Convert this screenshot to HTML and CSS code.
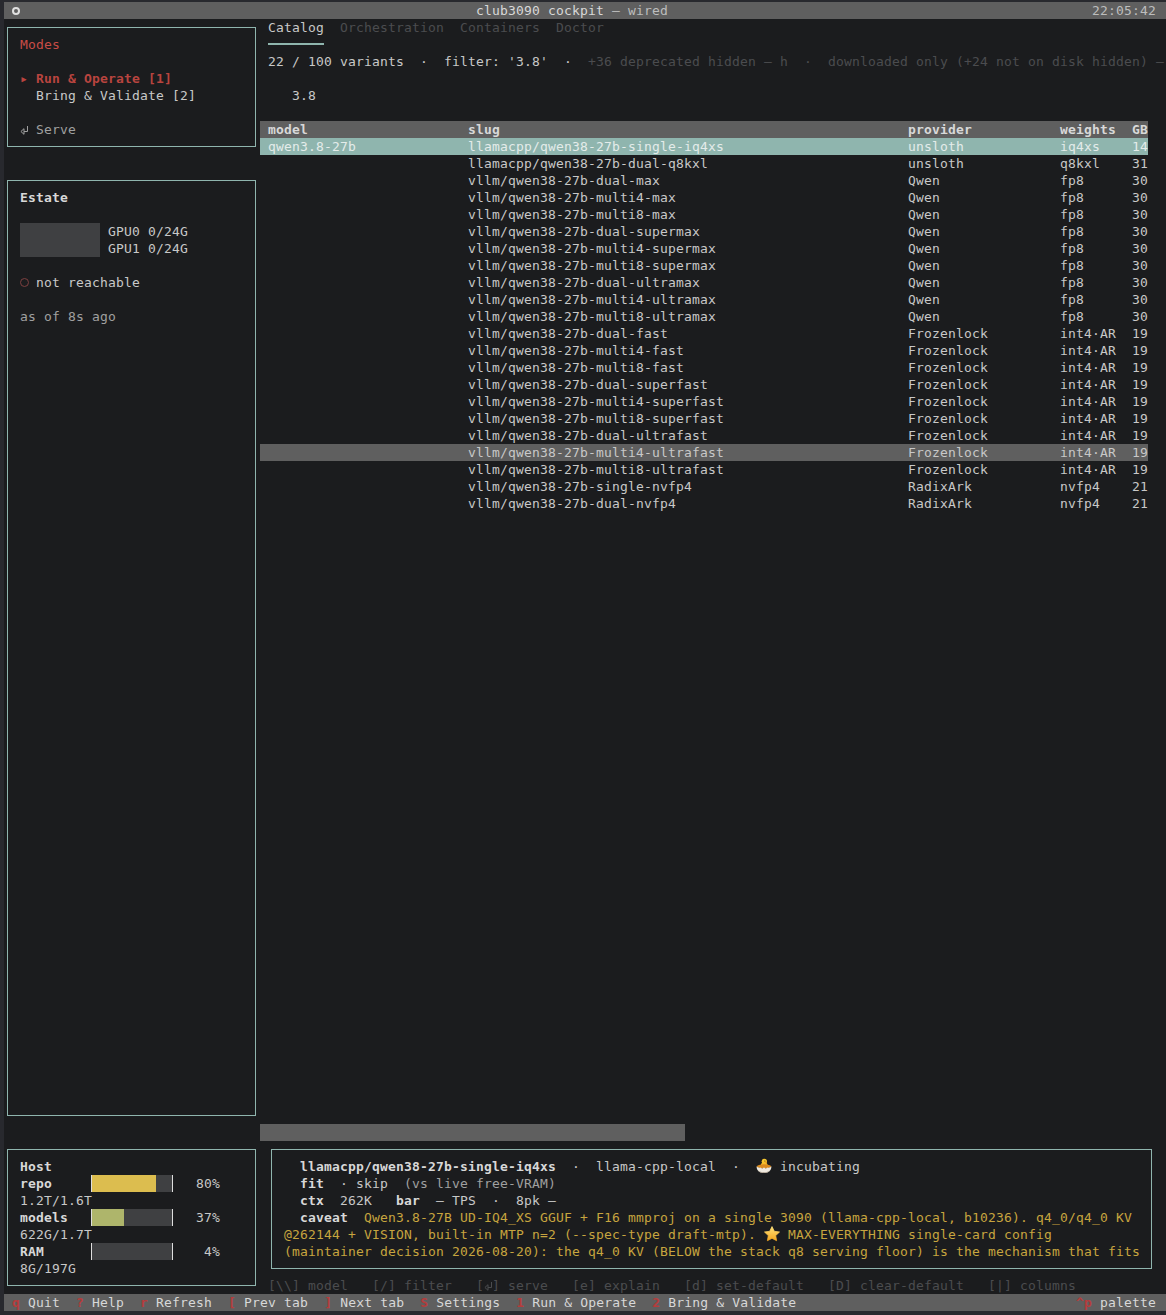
FILE: index.html
```html
<!DOCTYPE html>
<html lang="en">
<head>
    <meta charset="UTF-8">
    <meta name="viewport" content="width=device-width, initial-scale=1.0">
    <title>club3090 cockpit</title>
    <link rel="stylesheet" href="styles.css">
</head>
<body>
<div class="app">
    <div class="titlebar">
        <span class="title-dot"></span>
        <span class="title">club3090 cockpit <span class="title-sub">— wired</span></span>
        <span class="clock">22:05:42</span>
    </div>

    <div class="main">
        <div class="sidebar">
            <div class="box modes">
                <div class="red">Modes</div>
                <div class="blank"></div>
                <div class="red strong"><span class="arrow">▸</span>Run &amp; Operate [1]</div>
                <div class="indent">Bring &amp; Validate [2]</div>
                <div class="blank"></div>
                <div class="soft"><span class="arrow"><svg class="enter" viewBox="0 0 8 9"><path d="M7.500 0v5.500H4M4 2.700L.9 5.500 4 8.300z" fill="none" stroke="currentColor"/></svg></span>Serve</div>
            </div>

            <div class="box estate">
                <div class="bold">Estate</div>
                <div class="blank"></div>
                <div class="gpus">
                    <div class="gpu-block"></div>
                    <div>GPU0 0/24G<br>GPU1 0/24G</div>
                </div>
                <div class="blank"></div>
                <div><span class="arrow"><span class="status-dot"></span></span>not reachable</div>
                <div class="blank"></div>
                <div class="soft">as of 8s ago</div>
            </div>

            <div class="box host">
                <div class="bold">Host</div>
                <div class="meter">
                    <span class="bold">repo</span>
                    <div class="bar"><div class="fill yellow" style="width:64px"></div></div>
                    <span class="pct">80%</span>
                </div>
                <div>1.2T/1.6T</div>
                <div class="meter">
                    <span class="bold">models</span>
                    <div class="bar"><div class="fill olive" style="width:32px"></div></div>
                    <span class="pct">37%</span>
                </div>
                <div>622G/1.7T</div>
                <div class="meter">
                    <span class="bold">RAM</span>
                    <div class="bar"></div>
                    <span class="pct">4%</span>
                </div>
                <div>8G/197G</div>
            </div>
        </div>

        <div class="content">
            <div class="tabs">
                <span class="tab active">Catalog</span>
                <span class="tab">Orchestration</span>
                <span class="tab">Containers</span>
                <span class="tab">Doctor</span>
            </div>

            <div class="filters">22 / 100 variants  ·  filter: '3.8'  ·  <span class="dim">+36 deprecated hidden — h  ·  downloaded only (+24 not on disk hidden) —</span></div>
            <div class="query">3.8</div>

            <div class="table">
                <div class="row head"><span>model</span><span>slug</span><span>provider</span><span>weights</span><span>GB</span></div>
                <div class="row selected"><span>qwen3.8-27b</span><span>llamacpp/qwen38-27b-single-iq4xs</span><span>unsloth</span><span>iq4xs</span><span>14</span></div>
                <div class="row"><span></span><span>llamacpp/qwen38-27b-dual-q8kxl</span><span>unsloth</span><span>q8kxl</span><span>31</span></div>
                <div class="row"><span></span><span>vllm/qwen38-27b-dual-max</span><span>Qwen</span><span>fp8</span><span>30</span></div>
                <div class="row"><span></span><span>vllm/qwen38-27b-multi4-max</span><span>Qwen</span><span>fp8</span><span>30</span></div>
                <div class="row"><span></span><span>vllm/qwen38-27b-multi8-max</span><span>Qwen</span><span>fp8</span><span>30</span></div>
                <div class="row"><span></span><span>vllm/qwen38-27b-dual-supermax</span><span>Qwen</span><span>fp8</span><span>30</span></div>
                <div class="row"><span></span><span>vllm/qwen38-27b-multi4-supermax</span><span>Qwen</span><span>fp8</span><span>30</span></div>
                <div class="row"><span></span><span>vllm/qwen38-27b-multi8-supermax</span><span>Qwen</span><span>fp8</span><span>30</span></div>
                <div class="row"><span></span><span>vllm/qwen38-27b-dual-ultramax</span><span>Qwen</span><span>fp8</span><span>30</span></div>
                <div class="row"><span></span><span>vllm/qwen38-27b-multi4-ultramax</span><span>Qwen</span><span>fp8</span><span>30</span></div>
                <div class="row"><span></span><span>vllm/qwen38-27b-multi8-ultramax</span><span>Qwen</span><span>fp8</span><span>30</span></div>
                <div class="row"><span></span><span>vllm/qwen38-27b-dual-fast</span><span>Frozenlock</span><span>int4·AR</span><span>19</span></div>
                <div class="row"><span></span><span>vllm/qwen38-27b-multi4-fast</span><span>Frozenlock</span><span>int4·AR</span><span>19</span></div>
                <div class="row"><span></span><span>vllm/qwen38-27b-multi8-fast</span><span>Frozenlock</span><span>int4·AR</span><span>19</span></div>
                <div class="row"><span></span><span>vllm/qwen38-27b-dual-superfast</span><span>Frozenlock</span><span>int4·AR</span><span>19</span></div>
                <div class="row"><span></span><span>vllm/qwen38-27b-multi4-superfast</span><span>Frozenlock</span><span>int4·AR</span><span>19</span></div>
                <div class="row"><span></span><span>vllm/qwen38-27b-multi8-superfast</span><span>Frozenlock</span><span>int4·AR</span><span>19</span></div>
                <div class="row"><span></span><span>vllm/qwen38-27b-dual-ultrafast</span><span>Frozenlock</span><span>int4·AR</span><span>19</span></div>
                <div class="row hover"><span></span><span>vllm/qwen38-27b-multi4-ultrafast</span><span>Frozenlock</span><span>int4·AR</span><span>19</span></div>
                <div class="row"><span></span><span>vllm/qwen38-27b-multi8-ultrafast</span><span>Frozenlock</span><span>int4·AR</span><span>19</span></div>
                <div class="row"><span></span><span>vllm/qwen38-27b-single-nvfp4</span><span>RadixArk</span><span>nvfp4</span><span>21</span></div>
                <div class="row"><span></span><span>vllm/qwen38-27b-dual-nvfp4</span><span>RadixArk</span><span>nvfp4</span><span>21</span></div>
            </div>

            <div class="scrollbar"></div>

            <div class="box detail">
                <div class="line indent2"><span class="bold">llamacpp/qwen38-27b-single-iq4xs</span>  ·  llama-cpp-local  ·  <svg class="emoji" viewBox="0 0 16 16"><circle cx="8.300" cy="3.400" r="2.700" fill="#f6c62f"/><ellipse cx="8.200" cy="7" rx="3.400" ry="2.600" fill="#f4bb2a"/><path d="M9.500 3.600l1.800.5-1.700.8z" fill="#e8851c"/><circle cx="8.900" cy="2.900" r=".5" fill="#3a2a10"/><ellipse cx="8" cy="8.300" rx="7.200" ry="2" fill="#d98a1e"/><path d="M.6 8.300c1.200 1.400 3 1.600 4 1.200l1.500 1 1.900-1 1.900 1 1.500-1c1 .4 2.800.2 4-1.200.2 3.500-2.600 6.700-7.400 6.700S.4 11.800.6 8.300z" fill="#efe9df"/><path d="M2 12.200c1.400 1.500 3.500 2 6 2s4.600-.5 6-2c-1 2-3.200 2.900-6 2.900s-5-.9-6-2.900z" fill="#a89b8c"/></svg> incubating</div>
                <div class="line indent2"><span class="bold">fit</span>  · skip  <span class="soft">(vs live free-VRAM)</span></div>
                <div class="line indent2"><span class="bold">ctx</span>  262K   <span class="bold">bar</span>  — TPS  ·  8pk —</div>
                <div class="line indent2"><span class="bold">caveat</span>  <span class="gold">Qwen3.8-27B UD-IQ4_XS GGUF + F16 mmproj on a single 3090 (llama-cpp-local, b10236). q4_0/q4_0 KV</span></div>
                <div class="line gold">@262144 + VISION, built-in MTP n=2 (--spec-type draft-mtp). <svg class="emoji" viewBox="0 0 16 16"><defs><linearGradient id="star" x1="0" y1="0" x2="0" y2="1"><stop offset="0" stop-color="#ffe27a"/><stop offset="1" stop-color="#f2a51e"/></linearGradient></defs><path d="M8 .6l2.300 4.700 5.200.7-3.800 3.600.9 5.100L8 12.300l-4.600 2.400.9-5.100L.5 6l5.200-.7z" fill="url(#star)" stroke="url(#star)" stroke-width=".8" stroke-linejoin="round"/></svg> MAX-EVERYTHING single-card config</div>
                <div class="line gold">(maintainer decision 2026-08-20): the q4_0 KV (BELOW the stack q8 serving floor) is the mechanism that fits</div>
            </div>

            <div class="hints">[\\] model   [/] filter   [<svg class="enter" viewBox="0 0 8 9"><path d="M7.500 0v5.500H4M4 2.700L.9 5.500 4 8.300z" fill="none" stroke="currentColor"/></svg>] serve   [e] explain   [d] set-default   [D] clear-default   [|] columns</div>
        </div>
    </div>

    <div class="footer">
        <span class="key"><b>q</b> Quit</span>
        <span class="key"><b>?</b> Help</span>
        <span class="key"><b>r</b> Refresh</span>
        <span class="key"><b>[</b> Prev tab</span>
        <span class="key"><b>]</b> Next tab</span>
        <span class="key"><b>S</b> Settings</span>
        <span class="key"><b>1</b> Run &amp; Operate</span>
        <span class="key"><b>2</b> Bring &amp; Validate</span>
        <span class="key palette"><b>^p</b> palette</span>
    </div>
</div>
</body>
</html>
```

FILE: styles.css
```css
html, body{
    margin: 0;
    height: 100%;
}
body{
    background-color: #28292e;
    padding: 2px 0 4px 4px;
    box-sizing: border-box;
    overflow: hidden;
    color: #c8c8c8;
    font-family: "DejaVu Sans Mono", "Liberation Mono", monospace;
    font-size: 13px;
    letter-spacing: 0.174px; /*13px DejaVu is 7.83 wide, terminal cell is 8*/
    line-height: 17px;
}
.app{
    height: 100%;
    display: flex;
    flex-direction: column;
    background-color: #1b1c1e;
}
.titlebar, .footer{
    height: 17px;
    flex: none;
    display: flex;
    align-items: center;
    background-color: #5f5f5f;
    color: #d8d8d8;
}
.title-dot{
    width: 8px;
    height: 8px;
    box-sizing: border-box;
    margin-left: 8px;
    border: 2px solid #e0e0e0;
    border-radius: 50%;
}
.title{
    margin-left: 456px;
}
.title-sub{
    color: #bdbdbd;
}
.clock{
    margin-left: auto;
    padding-right: 10px;
    color: #bdbdbd;
}
.main{
    flex: 1;
    display: flex;
    min-height: 0;
}
.sidebar{
    width: 256px;
    flex: none;
    box-sizing: border-box;
    padding: 8px 4px 8px 3px;
    display: flex;
    flex-direction: column;
    gap: 33px;
}
.box{
    border: 1px solid #8fb5ae;
    padding: 8px 12px;
    box-sizing: border-box;
}
.modes{
    height: 120px;
}
.estate{
    flex: 1;
}
.host{
    height: 137px;
}
.blank{
    height: 17px;
}
.red{
    color: #c94c46;
}
.strong{
    font-weight: bold;
    color: #b9443f;
}
.bold{
    font-weight: bold;
    color: #d8d8d8;
}
.soft{
    color: #a0a0a0;
}
.arrow{
    display: inline-block;
    width: 16px;
}
.enter{
    width: 8px;
    height: 9px;
    vertical-align: -1px;
}
.indent{
    padding-left: 16px;
}
.gpus{
    display: flex;
    gap: 8px;
}
.gpu-block{
    width: 80px;
    height: 34px;
    background-color: #3f4042;
}
.status-dot{
    display: inline-block;
    width: 9px;
    height: 9px;
    box-sizing: border-box;
    border: 1px solid #7d4040;
    border-radius: 50%;
}
.meter{
    display: grid;
    grid-template-columns: 71px 82px 47px;
}
.bar{
    height: 17px;
    box-sizing: border-box;
    border-left: 1px solid #dedede;
    border-right: 1px solid #dedede;
    background-color: #3f4042;
}
.fill{
    height: 100%;
}
.yellow{
    background-color: #dcbd4f;
}
.olive{
    background-color: #aeb56b;
}
.pct{
    text-align: right;
}
.content{
    flex: 1;
    min-width: 0;
    display: flex;
    flex-direction: column;
    overflow: hidden;
}
.tabs{
    display: flex;
    gap: 16px;
    padding-left: 8px;
    height: 26px;
    flex: none;
}
.tab{
    color: #4b4c4f;
    height: 17px;
    padding-bottom: 7px;
}
.tab.active{
    color: #c8c8c8;
    border-bottom: 2px solid #8fb5ae;
}
.filters{
    margin-top: 8px;
    padding-left: 8px;
    white-space: pre;
}
.dim{
    color: #4b4c4f;
}
.query{
    margin-top: 17px;
    padding-left: 32px;
}
.table{
    margin-top: 17px;
    width: 888px;
}
.row{
    display: grid;
    grid-template-columns: 200px 440px 152px 72px 16px;
    padding-left: 8px;
    height: 17px;
    overflow: hidden;
}
.head{
    background-color: #5f5f5f;
    color: #d8d8d8;
    font-weight: bold;
}
.selected{
    background-color: #8fb5ae;
    color: #e4ecea;
}
.hover{
    background-color: #5f5f5f;
}
.scrollbar{
    margin-top: auto;
    width: 425px;
    height: 17px;
    flex: none;
    background-color: #5f5f5f;
}
.detail{
    margin: 8px 14px 0 11px;
    height: 120px;
    flex: none;
}
.line{
    height: 17px;
    white-space: pre;
}
.indent2{
    padding-left: 16px;
}
.gold{
    color: #c7a53f;
}
.emoji{
    width: 16px;
    height: 16px;
    vertical-align: -3px;
}
.hints{
    margin-top: 8px;
    padding-left: 8px;
    color: #4b4c4f;
    white-space: pre;
}
.footer{
    padding-left: 8px;
    gap: 16px;
}
.key{
    white-space: pre;
}
.key b{
    color: #b53c3c;
}
.palette{
    margin-left: auto;
    padding-right: 10px;
}
```
